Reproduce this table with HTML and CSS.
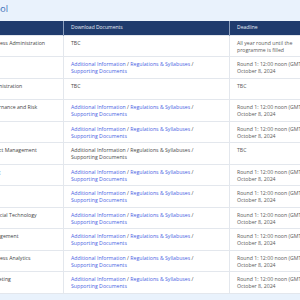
FILE: index.html
```html
<!DOCTYPE html>
<html lang="en">
  <head>
    <meta charset="UTF-8" />
    <meta name="viewport" content="width=device-width, initial-scale=1.0" />
    <title>Programmes</title>
    <link rel="stylesheet" href="styles.css">
  </head>
  <body>
    <div class="wrap">
      <h2 class="title">Business School</h2>
      <table class="prog">
        <colgroup>
          <col class="c-name">
          <col class="c-docs">
          <col class="c-date">
        </colgroup>
        <thead>
          <tr>
            <th>Programme</th>
            <th>Download Documents</th>
            <th>Deadline</th>
          </tr>
        </thead>
        <tbody>
          <tr>
            <td>Master of Business Administration</td>
            <td>TBC</td>
            <td>All year round until the programme is filled</td>
          </tr>
          <tr>
            <td>MSc Finance</td>
            <td><a href="#">Additional Information</a> / <a href="#">Regulations &amp; Syllabuses</a> / <a href="#">Supporting Documents</a></td>
            <td><span class="nw">Round 1: 12:00 noon (GMT + 8)</span><br>October 8, 2024</td>
          </tr>
          <tr>
            <td>Master of Administration</td>
            <td>TBC</td>
            <td>TBC</td>
          </tr>
          <tr>
            <td>Master of Governance and Risk</td>
            <td><a href="#">Additional Information</a> / <a href="#">Regulations &amp; Syllabuses</a> / <a href="#">Supporting Documents</a></td>
            <td><span class="nw">Round 1: 12:00 noon (GMT + 8)</span><br>October 8, 2024</td>
          </tr>
          <tr>
            <td>MSc Economics</td>
            <td><a href="#">Additional Information</a> / <a href="#">Regulations &amp; Syllabuses</a> / <a href="#">Supporting Documents</a></td>
            <td><span class="nw">Round 1: 12:00 noon (GMT + 8)</span><br>October 8, 2024</td>
          </tr>
          <tr>
            <td>Master of Project Management</td>
            <td>Additional Information / Regulations &amp; Syllabuses / Supporting Documents</td>
            <td>TBC</td>
          </tr>
          <tr>
            <td>MSc Accounting</td>
            <td><a href="#">Additional Information</a> / <a href="#">Regulations &amp; Syllabuses</a> / <a href="#">Supporting Documents</a></td>
            <td><span class="nw">Round 1: 12:00 noon (GMT + 8)</span><br>October 8, 2024</td>
          </tr>
          <tr>
            <td>MSc Statistics</td>
            <td><a href="#">Additional Information</a> / <a href="#">Regulations &amp; Syllabuses</a> / <a href="#">Supporting Documents</a></td>
            <td><span class="nw">Round 1: 12:00 noon (GMT + 8)</span><br>October 8, 2024</td>
          </tr>
          <tr>
            <td>Master of Financial Technology</td>
            <td><a href="#">Additional Information</a> / <a href="#">Regulations &amp; Syllabuses</a> / <a href="#">Supporting Documents</a></td>
            <td><span class="nw">Round 1: 12:00 noon (GMT + 8)</span><br>October 8, 2024</td>
          </tr>
          <tr>
            <td>Master of Management</td>
            <td><a href="#">Additional Information</a> / <a href="#">Regulations &amp; Syllabuses</a> / <a href="#">Supporting Documents</a></td>
            <td><span class="nw">Round 1: 12:00 noon (GMT + 8)</span><br>October 8, 2024</td>
          </tr>
          <tr>
            <td>Master of Business Analytics</td>
            <td><a href="#">Additional Information</a> / <a href="#">Regulations &amp; Syllabuses</a> / <a href="#">Supporting Documents</a></td>
            <td><span class="nw">Round 1: 12:00 noon (GMT + 8)</span><br>October 8, 2024</td>
          </tr>
          <tr>
            <td>Master of Marketing</td>
            <td><a href="#">Additional Information</a> / <a href="#">Regulations &amp; Syllabuses</a> / <a href="#">Supporting Documents</a></td>
            <td><span class="nw">Round 1: 12:00 noon (GMT + 8)</span><br>October 8, 2024</td>
          </tr>
        </tbody>
      </table>
    </div>
  </body>
</html>
```

FILE: styles.css
```css
body {
  margin: 0;
  padding: 0;
  background: #e9f2fc;
  font-family: "Open Sans", "Noto Sans", sans-serif;
  overflow: hidden;
}
.wrap {
  margin-left: -46px;
  width: 359px;
}
.title {
  margin: 0;
  padding-top: 3px;
  height: 18px;
  width: 54px;
  display: flex;
  justify-content: flex-end;
  white-space: nowrap;
  font-size: 9px;
  line-height: 11px;
  font-weight: normal;
  color: #3b6fb8;
}
.prog {
  width: 359px;
  table-layout: fixed;
  border-collapse: collapse;
  background: #fff;
  font-size: 5.2px;
  line-height: 7px;
}
.c-name { width: 109px; }
.c-docs { width: 166px; }
.prog th {
  background: #1f3b6d;
  color: #e8eef7;
  font-weight: normal;
  font-size: 5px;
  text-align: left;
  height: 14px;
  padding: 0 7px;
  border-left: 1px solid #8da0bf;
  box-sizing: border-box;
}
.prog th:first-child { border-left: 0; }
.prog td {
  vertical-align: top;
  padding: 4px 7px 2px;
  height: 21.5px;
  box-sizing: border-box;
  border: 1.5px solid #e3e7ed;
  color: #4a4a4a;
}
.prog td:nth-child(2) { padding-right: 28px; }
.prog td:first-child { color: #444; }
.prog td:last-child { color: #5a5a5a; }
.prog a {
  color: #4a5fe3;
  text-decoration: none;
}
.nw { white-space: nowrap; }
```
